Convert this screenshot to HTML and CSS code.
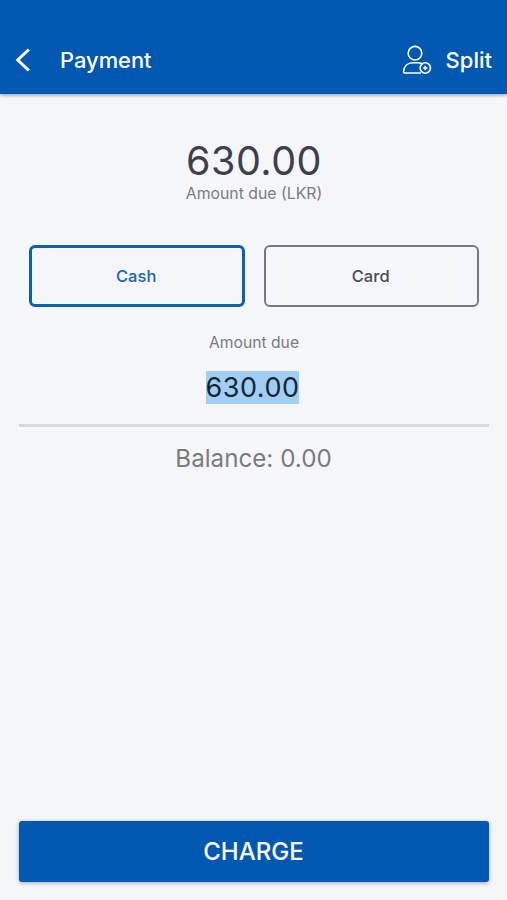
FILE: index.html
```html
<!DOCTYPE html>
<html lang="en">
<head>
<meta charset="utf-8">
<title>Payment</title>
<link rel="stylesheet" href="styles.css">
</head>
<body>
<header class="bar">
  <svg class="back" width="18" height="26" viewBox="0 0 18 26"><path d="M14.800 2.500 3.800 13l11 10.500"/></svg>
  <h1 class="title">Payment</h1>
  <svg class="user" width="32" height="32" viewBox="0 0 32 32"><circle cx="13" cy="9.200" r="6.800"/><path d="M19 29H3.200C2.200 29 1.500 28.500 1.600 27.500c.4-5.500 4.200-8.800 9.200-8.800h4.500c2 0 3.500.4 5 1.300"/><circle cx="23.300" cy="24" r="5.200"/><path d="M23.300 21.800v4.400M21.100 24h4.400"/></svg>
  <span class="split">Split</span>
</header>
<main class="content">
  <div class="total">630.00</div>
  <div class="total-label">Amount due (LKR)</div>
  <div class="methods">
    <button class="method active">Cash</button>
    <button class="method">Card</button>
  </div>
  <div class="label">Amount due</div>
  <div class="field"><span class="selected">630.00</span></div>
  <div class="balance">Balance: 0.00</div>
  <button class="charge">CHARGE</button>
</main>
</body>
</html>
```
FILE: styles.css
```css
* { box-sizing: border-box; }
body { margin: 0; height: 900px; display: flex; flex-direction: column; background: #f4f6fa; font-family: Inter, sans-serif; color: #3d404a; }
.bar { height: 94px; padding: 25px 15px 0 14px; display: flex; align-items: center; background: #0058b1; color: #fff; box-shadow: 0 1px 4px #0006; }
.back, .user { fill: none; stroke: #fff; }
.back { stroke-width: 3; }
.title { margin: 0 auto 0 28px; font-size: 21.900px; font-weight: 500; }
.user { stroke-width: 1.600; margin-right: 12px; }
.split { font-size: 22px; font-weight: 500; }
.content { flex: 1; padding: 45px 18px 18px 19px; display: flex; flex-direction: column; text-align: center; }
.total { font-size: 39.500px; line-height: 44px; letter-spacing: .5px; }
.total-label { margin-top: 3px; font-size: 15.800px; line-height: 16px; color: #7b7b7f; }
.methods { display: grid; grid-template-columns: 1fr 1fr; gap: 19px; margin: 43px 10px 0; }
.method { height: 62px; padding: 0 1px 0 0; border: 2px solid #77797e; border-radius: 6px; background: none; font: 500 16.500px Inter, sans-serif; letter-spacing: .1px; color: #4c4e54; }
.method.active { padding-right: 1px; border: 3px solid #0f5eb2; color: #1c64b2; }
.label { margin-top: 26px; font-size: 15.700px; line-height: 20px; color: #7b7b7f; }
.field { height: 74px; padding: 18px 3px 0 0; border-bottom: 3px solid #d7d9dd; font-size: 27px; line-height: 33px; color: #142632; }
.selected { display: inline-block; background: #a1cef5; letter-spacing: .5px; }
.balance { margin-top: 15px; padding-right: 1px; font-size: 24.200px; line-height: 34px; color: #7b7b7f; }
.charge { margin-top: auto; height: 61px; padding: 0 1px 0 0; border: 0; border-radius: 3px; background: #0058b1; color: #fff; font: 500 24px Inter, sans-serif; box-shadow: 0 1px 4px #0005; }
```
